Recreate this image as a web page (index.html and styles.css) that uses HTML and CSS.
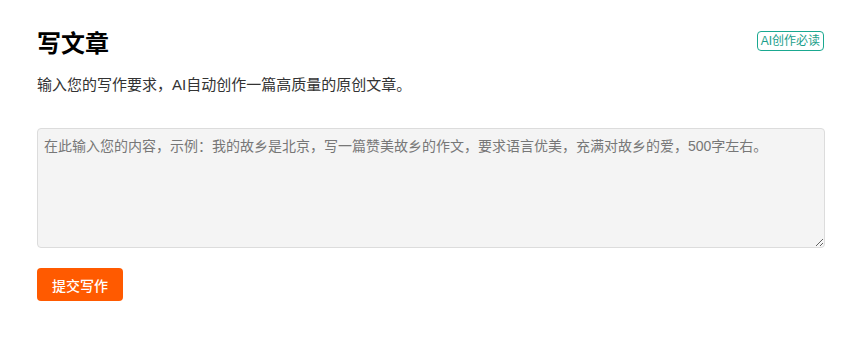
FILE: index.html
```html
<!DOCTYPE html>
<html lang="zh">
<head>
<meta charset="utf-8">
<link rel="stylesheet" href="styles.css">
</head>
<body>
<div class="page">
  <div class="head">
    <h1 class="title">写文章</h1>
    <span class="badge">AI创作必读</span>
  </div>
  <p class="desc">输入您的写作要求，AI自动创作一篇高质量的原创文章。</p>
  <textarea class="input" placeholder="在此输入您的内容，示例：我的故乡是北京，写一篇赞美故乡的作文，要求语言优美，充满对故乡的爱，500字左右。"></textarea>
  <button class="submit">提交写作</button>
</div>
</body>
</html>
```
FILE: styles.css
```css
html, body {
  margin: 0;
  padding: 0;
  background: #fff;
}
body {
  font-family: "Liberation Sans", "Noto Sans CJK SC", sans-serif;
  color: #333;
}
.page {
  padding: 28px 18px 0 37px;
  display: flex;
  flex-direction: column;
  align-items: flex-start;
}
.head {
  width: 100%;
  display: flex;
  justify-content: space-between;
  align-items: flex-start;
}
.title {
  margin: 0;
  font-size: 24px;
  line-height: 32px;
  font-weight: 700;
  color: #000;
}
.badge {
  font-size: 12px;
  line-height: 18px;
  color: #1a9e8a;
  border: 1px solid #1aa890;
  border-radius: 4px;
  padding: 0 3px;
  margin-top: 3px;
  margin-right: 1px;
}
.desc {
  margin: 14px 0 0;
  font-size: 15px;
  line-height: 22px;
  color: #333;
}
.input {
  box-sizing: border-box;
  margin-top: 32px;
  width: 100%;
  height: 120px;
  background: #f4f4f4;
  border: 1px solid #dcdcdc;
  border-radius: 4px;
  padding: 7px 6px;
  font-family: "Liberation Sans", "Noto Sans CJK SC", sans-serif;
  font-size: 14px;
  line-height: 20px;
  color: #333;
  resize: vertical;
}
.input::placeholder {
  color: #777;
}
.submit {
  margin-top: 20px;
  height: 33px;
  padding: 0 15px;
  background: #ff5a00;
  border: none;
  border-radius: 4px;
  color: #fff;
  font-family: "Liberation Sans", "Noto Sans CJK SC", sans-serif;
  font-size: 14px;
  font-weight: 500;
}
```
